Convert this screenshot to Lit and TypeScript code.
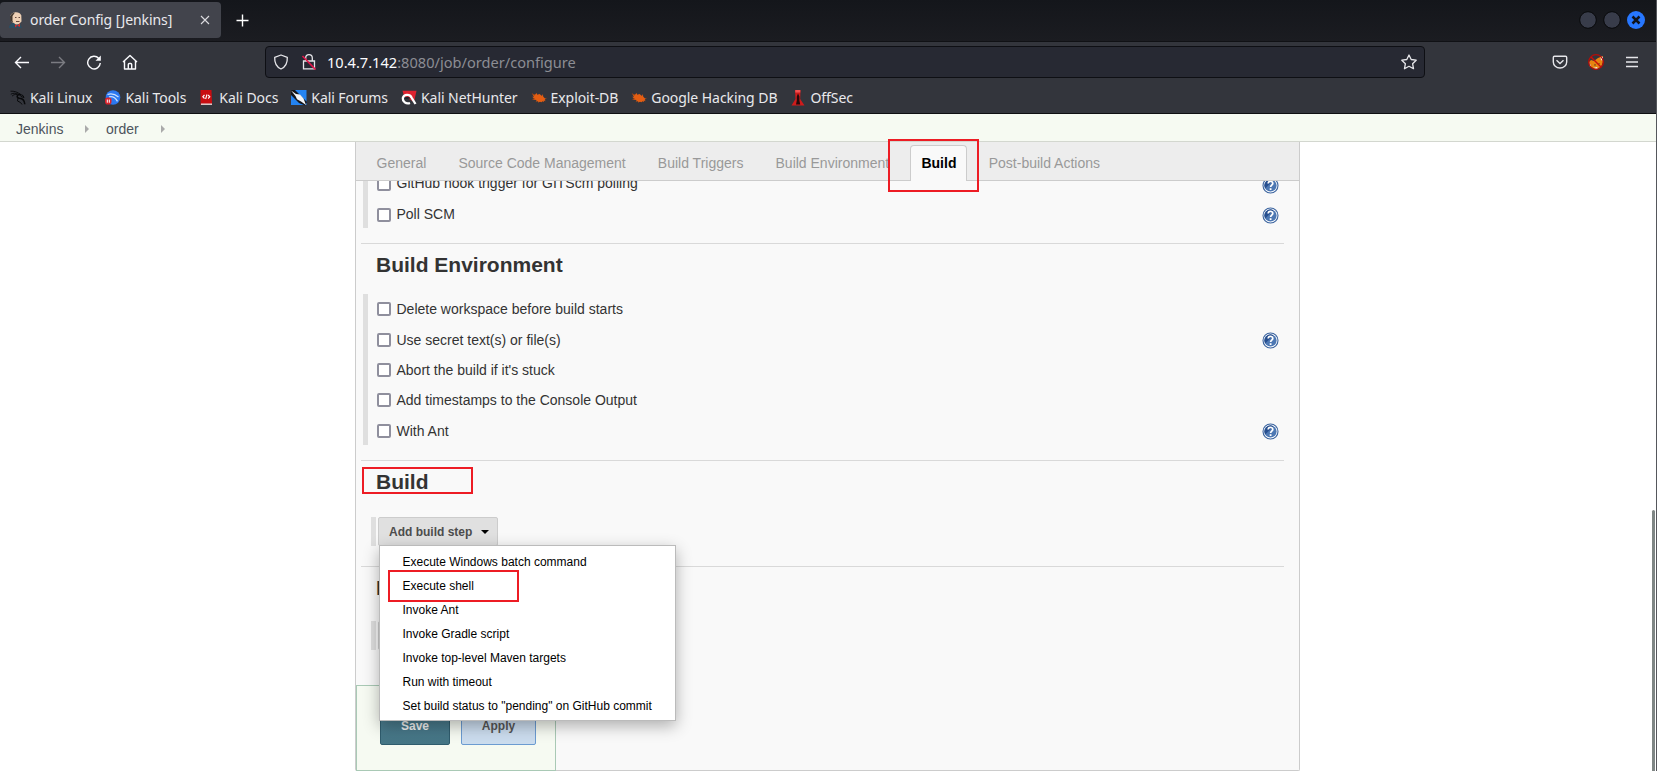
import { LitElement, html, svg, css } from "lit";
import { customElement } from "lit/decorators.js";

const help = html`<svg class="help" width="17" height="17" viewBox="0 0 17 17">
  <circle cx="8.5" cy="8.5" r="7.5" fill="#fff" stroke="#3b649f" stroke-width="1.1"/>
  <circle cx="8.5" cy="8.5" r="6.1" fill="#4d78b3"/>
  <path d="M3.2 11.5A6.1 6.1 0 0 1 11.5 3.2Z" fill="#274f8f"/>
  <path d="M6.2 6.6C6.2 3.6 10.9 3.7 10.8 6.4C10.7 8.2 8.6 8 8.6 10" fill="none" stroke="#fff" stroke-width="1.7"/>
  <rect x="7.7" y="11.2" width="1.8" height="1.8" fill="#fff"/></svg>`;

const marks: Record<string, unknown> = {
  linux: svg`<path d="M.5 1.200C4 1 7.500 1.800 10.500 4.600M.8 4.200C3.500 2.800 6 3 8.500 4.300M2 6.200c1.500-1.500 3-2 5-1.700" fill="none" stroke="#08090b" stroke-width=".9"/><path d="M10.500 4.500C6.500 4 6 8 9.500 8.300c3.500.2 5 2.200 5.300 6" fill="none" stroke="#08090b" stroke-width="1.600"/><path d="M9 4 13 5.500 14 7.500 11 6.500ZM8 8l-.5 3 3 1.500 1.500 2" fill="none" stroke="#08090b" stroke-width="1"/>`,
  tools: svg`<circle cx="8" cy="7.500" r="7.300" fill="#2b78f0"/><path d="M2.500 4.500c4-1.500 7-.8 11 2.500M4 6.800c3-.8 6 .2 8.500 4.500" fill="none" stroke="#c9e0ff" stroke-width="1.300"/><rect x="0" y="7.500" width="6.500" height="7" rx="2.800" fill="#d9222c"/><path d="M2.300 9.500v3.200M4.300 9.500v3.200" stroke="#fff" stroke-width="1"/>`,
  docs: svg`<path d="M1.500 0h11l.5 12.500v2.500H1.500Z" fill="#c90d11"/><path d="M2 14.200H13" stroke="#ddd" stroke-width="1.400"/><path d="M5.500 5 3.800 6.800 5.500 8.500M9.100 5 10.800 6.800 9.100 8.500M8 4.500 6.600 9" fill="none" stroke="#fff" stroke-width="1.100"/>`,
  forums: svg`<path d="M0 0h15.500v15H0Z" fill="#2484f2"/><path d="M0 0 4 0 16 12 14 15.500 8 13 0 5Z" fill="#15161b"/><path d="M0 .5 5 4l4 .5 3.500 4 2.500 6.500-5-3.500-4-2.200-1.500-3.300Z" fill="#f2f5f8"/>`,
  hunter: svg`<path d="M1.500 .8h14L13 12 3 6Z" fill="#df2330"/><path d="M9 13C5 14.500 1.500 11.500 1.800 8 3 4 9 4 10.500 7.500L14.500 14" fill="none" stroke="#fff" stroke-width="2.300"/><path d="M3.500 8.500c2-2.500 4.500-2 6 0l-3.500.5Z" fill="#20222a"/>`,
  exploit: svg`<path d="m1 3.500 3 1.200L5.500 3l.8 1.700L8.500 4l2.500 2 .8-2 .5 2.700 1.500 1.500 1.700.2-1.700 1 .7 1.800-1.700-.6.2 1.400-1.500-.7-1 1-1.500-.5-2 .8.2-1.300-2.500.1 1-1.500L3.500 9.700 1.500 9.500l1.500-1L1.200 6.700 3 6.700Z" fill="#e45d12"/><path d="M.8 3.500 4 5.200M1 9.600 3.500 8.500M14.500 8.500l1.200-.3" stroke="#7a3b1c" stroke-width=".7"/>`,
  offsec: svg`<path d="M5 0h5.500l-.3 9 4.300 6.500H1.500L5.500 9Z" fill="#cf1b1b"/><path d="M5.300 0h5v2.500h-5Z" fill="#f05252"/><path d="M8 3.500 6.800 6.500v4L6 14.500h4.200L9.400 10.500V6.500Z" fill="#24090b"/>`,
};

@customElement("app-root")
export class AppRoot extends LitElement {
  static styles = css`
    :host { display: block; position: relative; width: 1657px; height: 771px; overflow: hidden; background: #fff; font-family: "Liberation Sans", Arial, sans-serif; }
    * { box-sizing: border-box; }
    svg { display: block; flex: none; }
    .browser { height: 114px; background: #33353c; border-bottom: 1px solid #0e0f12; color: #e9e9ec; font: 14.6px/20px "Noto Sans", sans-serif; }
    .tabs { height: 42px; display: flex; align-items: flex-start; background: linear-gradient(#14161b, #1b1c21); border-bottom: 1px solid #101115; padding-top: 2px; }
    .tab { width: 221px; height: 36px; border-radius: 4px; background: #42444c; display: flex; align-items: center; padding: 0 11px 0 8px; }
    .tab-title { margin-left: 6px; flex: 1; white-space: nowrap; font-size: 14px; letter-spacing: -.07px; }
    .plus { margin: 12px 0 0 15px; }
    .window { margin: 9px 12px 0 auto; display: flex; gap: 6px; }
    .bar { height: 40px; display: flex; align-items: center; padding-left: 14px; }
    .nav { display: flex; gap: 20px; }
    .url { width: 1160px; height: 32px; margin-left: 127px; border: 1px solid #0e0f14; border-radius: 4px; background: #272933; display: flex; align-items: center; padding: 0 7px; color: #8c8d94; white-space: nowrap; }
    .url b { color: #fbfbfe; font-weight: 400; }
    .address { margin-left: 10px; flex: 1; }
    .lock { margin-left: 12px; }
    .actions { margin-left: 127px; display: flex; gap: 20px; align-items: center; }
    .bookmarks { height: 31px; display: flex; gap: 13px; padding: 6px 0 0 10px; white-space: nowrap; font-size: 14px; letter-spacing: -.06px; }
    .bookmark { display: flex; align-items: center; height: 20px; gap: 4px; }
    .crumbs { height: 28px; background: #f6faf2; border-bottom: 1px solid #d3d7cf; display: flex; align-items: center; padding: 2px 0 0 16px; font-size: 14px; color: #4d545d; }
    .arrow { margin: 0 16.5px 0 22px; }
    .panel { width: 945px; height: 629px; margin-left: 355px; border: 1px solid #ccc; border-top: 0; border-radius: 0 0 2px 2px; background: #f9f9f9; color: #333; font-size: 14px; }
    .sections { height: 39px; background: #ededed; border-bottom: 1px solid #ccc; display: flex; align-items: flex-end; gap: 32.1px; padding-left: 20.5px; color: #999; white-space: nowrap; }
    .section { height: 35px; line-height: 36px; display: block; }
    .current { width: 57px; height: 36px; line-height: 34px; margin: 0 -10.8px -1px; border: 1px solid #ccc; border-bottom: 0; border-radius: 4px 4px 0 0; background: #f9f9f9; color: #000; font-weight: 700; text-align: center; }
    .group { height: 151px; margin-left: 7px; padding: 0 21px 0 14px; width: 937px; background: linear-gradient(#dfdfdf, #dfdfdf) left top / 5px 100% no-repeat; }
    .clipped { height: 47px; overflow: hidden; }
    .clipped .shift { margin-top: -12px; }
    .clipped span { padding-bottom: 2px; }
    .option { height: 30.4px; display: flex; align-items: center; }
    .help { margin-top: 2px; }
    .box { width: 14px; height: 14px; border: 2px solid #8f8f9d; border-radius: 2px; background: #fff; }
    .option span { margin-left: 5.5px; flex: 1; white-space: nowrap; }
    .rule { height: 1px; background: #d9d9d9; margin: 15px 15px 0 5px; }
    .rule.wide { margin-top: 20px; }
    h2 { margin: 0; padding: 9px 0 0 20px; height: 50px; font-size: 21px; line-height: 24px; color: #333; }
    .step { margin-left: 15px; height: 29px; display: flex; border-left: 5px solid #dfdfdf; padding-left: 2px; }
    .button { width: 120px; height: 29px; background: #e0e0e0; border: 1px solid #ccc; border-radius: 2px; display: flex; align-items: center; padding: 1px 0 0 10px; gap: 8.5px; font-size: 12px; font-weight: 700; color: #4d4d4d; white-space: nowrap; }
    .buildspace { height: 56px; }
    .post { height: 54px; }
    .footer { width: 200px; height: 86px; margin-top: 35px; border: 1px solid #a9c9b5; background: #f6faf2; padding: 28px 0 0 23px; display: flex; gap: 11px; font-size: 12px; font-weight: 700; }
    .save, .apply { height: 31px; border-radius: 2px; text-align: center; line-height: 22px; }
    .save { width: 70px; background: linear-gradient(#4a7b8d, #457585); border: 1px solid #2f5c6d; color: #eee; }
    .apply { width: 75px; background: #cbdcee; border: 1px solid #6b9bd1; color: #555; }
    .menu { position: absolute; left: 379px; top: 545px; width: 297px; height: 176px; background: #fff; border: 1px solid #bbb; box-shadow: 0 5px 15px rgba(0,0,0,.3); padding-top: 4px; font-size: 12px; color: #000; }
    .item { height: 24px; line-height: 24px; padding-left: 22.5px; white-space: nowrap; }
    .mark { position: absolute; border: 2px solid #ed1c24; }
    .mark-tab { left: 888px; top: 139px; width: 91px; height: 53px; }
    .mark-title { left: 362px; top: 467px; width: 111px; height: 27px; }
    .mark-item { left: 388px; top: 570px; width: 131px; height: 32px; }
    .edge { position: absolute; left: 1656px; top: 0; width: 1px; height: 771px; background: #55575c; }
    .scroll { position: absolute; left: 1652px; top: 510px; width: 3px; height: 262px; background: #7f8685; border-radius: 2px; }
  `;

  row(label: string, info = false) {
    return html`<div class="option"><i class="box"></i><span>${label}</span>${info ? help : ""}</div>`;
  }
  bookmark(icon: string, label: string) {
    return html`<div class="bookmark"><svg width="16" height="16" viewBox="0 0 16 16">${marks[icon]}</svg><span>${label}</span></div>`;
  }
  render() {
    return html`
      <div class="browser">
        <div class="tabs">
          <div class="tab">
            <svg width="16" height="16" viewBox="0 0 16 16"><path d="M2.500 4C3 0 11.500-1.500 13.300 3.500l.2 6-3 3H6.500L3 9Z" fill="#eed0b4"/><path d="M2.500 9 2 4.500 4 1.500 7 .5 4.500 4 4.500 9 5.500 11Z" fill="#42382f"/><path d="M1 16c0-3 2-5 5-5l2 2 4-1 2 4Z" fill="#2c4d62"/><path d="m7 12.500 5 2.500v-3.500l-5 4Z" fill="#d52b2b"/><path d="M7 5.500h1.500M10.500 5.500H12M8 9.500h3.500" stroke="#54382f" stroke-width=".9"/></svg>
            <span class="tab-title">order Config [Jenkins]</span>
            <svg width="10" height="10" viewBox="0 0 10 10"><path d="m1 1 8 8M9 1 1 9" stroke="#dcdce0" stroke-width="1.100"/></svg>
          </div>
          <svg class="plus" width="13" height="13" viewBox="0 0 13 13"><path d="M6.500.5v12M.5 6.500h12" stroke="#fff" stroke-width="1.400"/></svg>
          <div class="window">
            <svg width="18" height="18"><circle cx="9" cy="9" r="8.300" fill="#383c4a" stroke="#08090b"/></svg>
            <svg width="18" height="18"><circle cx="9" cy="9" r="8.300" fill="#383c4a" stroke="#08090b"/></svg>
            <svg width="18" height="18"><circle cx="9" cy="9" r="9" fill="#2777ff"/><path d="m5.500 5.500 7 7m0-7-7 7" stroke="#10131a" stroke-width="2.500"/></svg>
          </div>
        </div>
        <div class="bar">
          <div class="nav">
            <svg width="16" height="16" viewBox="0 0 16 16" fill="none" stroke="#fbfbfe" stroke-width="1.400"><path d="M15 8.500H1.500M7 3 1.500 8.500 7 14"/></svg>
            <svg width="16" height="16" viewBox="0 0 16 16" fill="none" stroke="#7b7c82" stroke-width="1.400"><path d="M1 8.500h13.500M9 3 14.500 8.500 9 14"/></svg>
            <svg width="16" height="16" viewBox="0 0 16 16" fill="none" stroke="#fbfbfe" stroke-width="1.400"><path d="M12.800 4.500A6.300 6.300 0 1 0 14.300 9"/><path d="M14.800 1.500v5.300H9.500Z" fill="#fbfbfe" stroke="none"/></svg>
            <svg width="16" height="16" viewBox="0 0 16 16" fill="none" stroke="#fbfbfe" stroke-width="1.400" stroke-linejoin="round"><path d="M1 8 8 1.500 15 8M2.500 7v8h11V7M6.300 15V10.500q0-1 1-1h1.400q1 0 1 1V15"/></svg>
          </div>
          <div class="url">
            <svg width="16" height="16" viewBox="0 0 16 16" fill="none" stroke="#e6e6ea" stroke-width="1.300"><path d="M8 1 14.300 3.300C14.600 9 12.500 13 8 15 3.500 13 1.400 9 1.700 3.300Z" stroke-linejoin="round"/></svg>
            <svg class="lock" width="16" height="16" viewBox="0 0 16 16" fill="none" stroke="#e6e6ea" stroke-width="1.300"><path d="M4.700 7V4a3.300 3.300 0 0 1 6.600 0v3M2.500 7h11v7.800h-11Z"/><path d="m1.500 2 13 13.500" stroke="#e2154a" stroke-width="1.700"/></svg>
            <span class="address"><b>10.4.7.142</b>:8080/job/order/configure</span>
            <svg width="16" height="16" viewBox="0 0 16 16" fill="none" stroke="#e6e6ea" stroke-width="1.300" stroke-linejoin="round"><path d="m8 1 2.200 4.500 5 .7-3.600 3.500.9 5L8 12.300l-4.500 2.400.9-5L.8 6.200l5-.7Z"/></svg>
          </div>
          <div class="actions">
            <svg width="16" height="16" viewBox="0 0 16 16" fill="none" stroke="#e6e6ea" stroke-width="1.400"><path d="M2.500 2.200h11q1.200 0 1.200 1.200V8a6.700 6 0 0 1-13.400 0V3.400q0-1.200 1.200-1.200Z"/><path d="M4.500 6.300 8 9.600l3.500-3.300"/></svg>
            <svg width="16" height="16" viewBox="0 0 16 16"><path d="M1 8 3 6l3 1 4-3 5-2v6l-2 5-5 2.500L3 13Z" fill="#e78411"/><path d="M12.500 2.500 15 3v4l-2-1ZM1 8l2 4-1 1ZM5 14l4-1 1 2Z" fill="#eee"/><path d="M6 10.500h2l-1 1.500ZM10 9h1.500v1Z" fill="#432"/><circle cx="8" cy="8" r="7.300" fill="none" stroke="#b70c08" stroke-width="1.300"/><path d="m3 3 10 10" stroke="#c80f0b" stroke-width="1.400"/></svg>
            <svg width="16" height="16" viewBox="0 0 16 16"><path d="M2 3.500h12M2 8h12M2 12.500h12" stroke="#e6e6ea" stroke-width="1.400"/></svg>
          </div>
        </div>
        <div class="bookmarks">
          ${this.bookmark("linux", "Kali Linux")}${this.bookmark("tools", "Kali Tools")}${this.bookmark("docs", "Kali Docs")}${this.bookmark("forums", "Kali Forums")}${this.bookmark("hunter", "Kali NetHunter")}${this.bookmark("exploit", "Exploit-DB")}${this.bookmark("exploit", "Google Hacking DB")}${this.bookmark("offsec", "OffSec")}
        </div>
      </div>
      <div class="crumbs">
        <span>Jenkins</span><svg class="arrow" width="4" height="8"><path d="M0 0 4 4 0 8Z" fill="#aaa"/></svg>
        <span>order</span><svg class="arrow" width="4" height="8"><path d="M0 0 4 4 0 8Z" fill="#aaa"/></svg>
      </div>
      <div class="panel">
        <div class="sections"><span class="section">General</span><span class="section">Source Code Management</span><span class="section">Build Triggers</span><span class="section">Build Environment</span><span class="section current">Build</span><span class="section">Post-build Actions</span></div>
        <div class="group clipped"><div class="shift">${this.row("GitHub hook trigger for GITScm polling", true)}${this.row("Poll SCM", true)}</div></div>
        <div class="rule"></div>
        <h2>Build Environment</h2>
        <div class="group">${this.row("Delete workspace before build starts")}${this.row("Use secret text(s) or file(s)", true)}${this.row("Abort the build if it's stuck")}${this.row("Add timestamps to the Console Output")}${this.row("With Ant", true)}</div>
        <div class="rule"></div>
        <h2 class="buildspace">Build</h2>
        <div class="step"><div class="button">Add build step<svg width="8" height="4"><path d="M0 0h8L4 4Z" fill="#000"/></svg></div></div>
        <div class="rule wide"></div>
        <h2 class="post">P</h2>
        <div class="step"><div class="button"></div></div>
        <div class="footer"><div class="save">Save</div><div class="apply">Apply</div></div>
      </div>
      <div class="menu">
        ${["Execute Windows batch command", "Execute shell", "Invoke Ant", "Invoke Gradle script", "Invoke top-level Maven targets", "Run with timeout", 'Set build status to "pending" on GitHub commit'].map(t => html`<div class="item">${t}</div>`)}
      </div>
      <div class="mark mark-tab"></div><div class="mark mark-title"></div><div class="mark mark-item"></div>
      <div class="scroll"></div><div class="edge"></div>`;
  }
}
